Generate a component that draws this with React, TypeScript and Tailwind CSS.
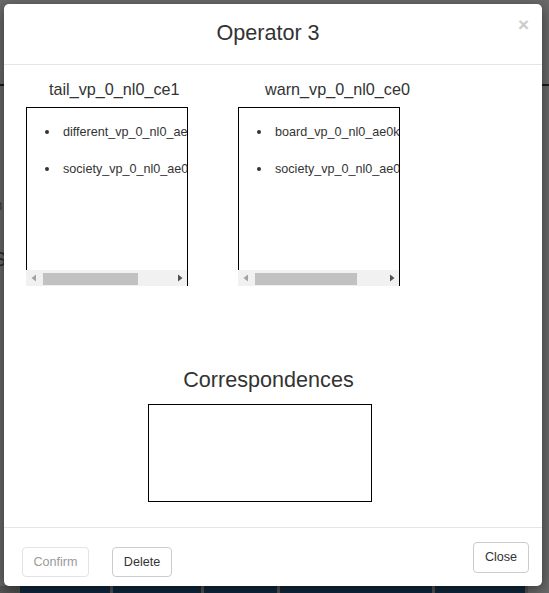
import React from "react";

const ff = "font-['Liberation_Sans',Arial,sans-serif]";

function ScrollBox({ items, thumbW }: { items: string[]; thumbW: number }) {
  return (
    <div className="w-[162px] h-[179px] border-t border-r border-black flex flex-col bg-white">
      <div className="flex-1 border-l border-black overflow-hidden">
        <ul className="pt-[15px] whitespace-nowrap text-[12.6px] leading-[18px] text-[#333]">
          {items.map((t, i) => (
            <li key={i} className="mb-[19px] flex items-center">
              <span className="shrink-0 ml-[18px] mr-[14px] w-[4px] h-[4px] rounded-full bg-[#333]" />
              <span>{t}</span>
            </li>
          ))}
        </ul>
      </div>
      <div className="h-[16px] bg-[#f1f1f1] flex items-center">
        <div className="w-[15px] h-[16px] flex items-center justify-center">
          <svg width="8" height="8" viewBox="0 0 8 8">
            <polygon points="6,0.5 1.5,4 6,7.5" fill="#a3a3a3" />
          </svg>
        </div>
        <div className="ml-[2px] h-[12px] mt-[1px] bg-[#c1c1c1]" style={{ width: thumbW }} />
        <div className="flex-1" />
        <div className="w-[15px] h-[16px] flex items-center justify-center">
          <svg width="8" height="8" viewBox="0 0 8 8">
            <polygon points="2,0.5 6.5,4 2,7.5" fill="#505050" />
          </svg>
        </div>
      </div>
    </div>
  );
}

export default function App() {
  return (
    <div className={`relative w-[549px] h-[593px] overflow-hidden bg-[#6a6a6a] ${ff}`}>
      {/* background page under overlay */}
      <div className="w-full h-full flex flex-col">
        <div className="h-[84px]" />
        <div className="h-[2px] bg-[#1a1a1a]" />
        <div className="flex-1 relative">
          <span className="absolute left-[-7px] top-[158px] text-[20px] text-[#2a2a2a]">S</span>
          <span className="absolute left-[-4px] top-[112px] text-[11px] text-[#333]">3</span>
        </div>
        <div className="h-[7px] flex gap-[3px] pl-[20px] bg-[#555]">
          <div className="w-[90px] bg-[#10293f]" />
          <div className="w-[88px] bg-[#10293f]" />
          <div className="w-[73px] bg-[#10293f]" />
          <div className="w-[152px] bg-[#10293f]" />
          <div className="w-[90px] bg-[#10293f]" />
          <div className="flex-1 bg-[#6a6a6a]" />
        </div>
      </div>

      {/* modal */}
      <div className="absolute left-[4px] top-[4px] w-[538px] h-[582px] bg-white rounded-[5px] shadow-[0_4px_14px_rgba(0,0,0,0.5)] flex flex-col text-[#333]">
        <div className="relative h-[61px] border-b border-[#e5e5e5] flex items-center justify-center pr-[10px] pb-[3px]">
          <span className="text-[21.6px] leading-[26px]">Operator 3</span>
          <span className="absolute right-[13px] top-[10px] text-[19px] leading-[22px] font-bold text-[#cbcbcb]">
            ×
          </span>
        </div>

        <div className="h-[462px] flex flex-col">
          <div className="flex pl-[22px] pt-[13px]">
            <div className="w-[212px] flex flex-col">
              <div className="pl-[23px] text-[16.2px] leading-[22px] mb-[7px]">tail_vp_0_nl0_ce1</div>
              <ScrollBox items={["different_vp_0_nl0_ae0", "society_vp_0_nl0_ae0"]} thumbW={95} />
            </div>
            <div className="w-[212px] flex flex-col">
              <div className="pl-[27px] text-[16.2px] leading-[22px] mb-[7px]">warn_vp_0_nl0_ce0</div>
              <ScrollBox items={["board_vp_0_nl0_ae0k", "society_vp_0_nl0_ae0"]} thumbW={102} />
            </div>
          </div>
          <div className="mt-[81px] text-center pr-[9px] text-[21.6px] leading-[26px]">Correspondences</div>
          <div className="mt-[11px] ml-[144px] w-[224px] h-[98px] border border-black" />
        </div>

        <div className="flex-1 border-t border-[#e5e5e5] flex items-start pl-[18px] pr-[13px] pt-[14px]">
          <div className="flex gap-[23px] mt-[5px]">
            <div className="w-[67px] h-[30px] border border-[#e3e3e3] rounded-[4px] flex items-center justify-center text-[12.6px] text-[#9a9a9a]">
              Confirm
            </div>
            <div className="w-[60px] h-[30px] border border-[#cccccc] rounded-[4px] flex items-center justify-center text-[12.6px] text-[#333]">
              Delete
            </div>
          </div>
          <div className="flex-1" />
          <div className="w-[56px] h-[31px] border border-[#cccccc] rounded-[4px] flex items-center justify-center text-[12.6px] text-[#333]">
            Close
          </div>
        </div>
      </div>
    </div>
  );
}
